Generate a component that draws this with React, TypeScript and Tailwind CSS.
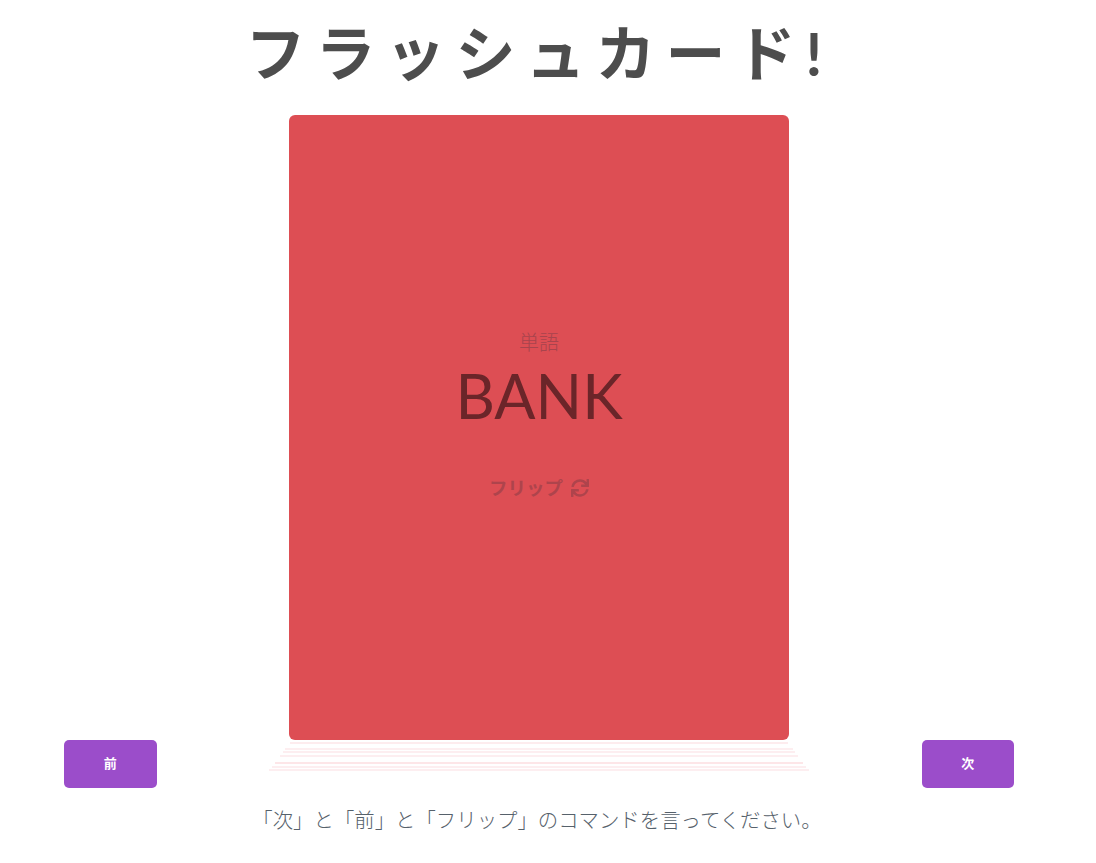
import { FaSync } from "react-icons/fa";

const lines: [number, number, string][] = [
  [2, 498, "bg-[#fdecee]"],
  [4, 508, "bg-[#fdeef0]"],
  [1, 512, "bg-[#fdeef0]"],
  [2, 518, "bg-[#fdeef0]"],
  [5, 528, "bg-[#fde6e8]"],
  [2, 534, "bg-[#fdeef0]"],
  [1, 540, "bg-[#fdeef0]"],
];

export default function App() {
  return (
    <div className="w-[1078px] h-[863px] overflow-hidden bg-white font-['Lato','Noto_Sans_CJK_JP',sans-serif]">
      <h1 className="h-[115px] flex items-center justify-center text-[60px] leading-none font-bold tracking-[10px] text-[#4d4d4d] pb-[10px]">
        フラッシュカード!
      </h1>
      <div className="flex items-start justify-between px-[64px]">
        <div className="w-[92.5px] pt-[625px]">
          <button className="w-full h-[48px] rounded-[5px] bg-[#9b4dca] text-white text-[13px] font-bold">前</button>
        </div>
        <div className="w-[500px] flex flex-col items-center">
          <div className="w-[500px] h-[625px] rounded-[6px] bg-[#dd4e54] flex flex-col items-center justify-center pb-[25px]">
            <div className="text-[20px] leading-[24px] font-light text-[#a8444d]">単語</div>
            <div className="text-[61px] leading-[84px] text-[#6b2529]">BANK</div>
            <div className="mt-[38px] flex items-center gap-[8px] text-[18.5px] leading-[24px] font-bold text-[#ae444c]">
              フリップ
              <FaSync size={18} />
            </div>
          </div>
          {lines.map(([gap, w, c], i) => (
            <div key={i} className={c} style={{ marginTop: gap, width: w, height: 2 }} />
          ))}
        </div>
        <div className="w-[92.5px] pt-[625px]">
          <button className="w-full h-[48px] rounded-[5px] bg-[#9b4dca] text-white text-[13px] font-bold">次</button>
        </div>
      </div>
      <p className="mt-[17px] text-center text-[20.4px] leading-[30px] font-light text-[#56616b] pr-[4px]">
        「次」と「前」と「フリップ」のコマンドを言ってください。
      </p>
    </div>
  );
}
